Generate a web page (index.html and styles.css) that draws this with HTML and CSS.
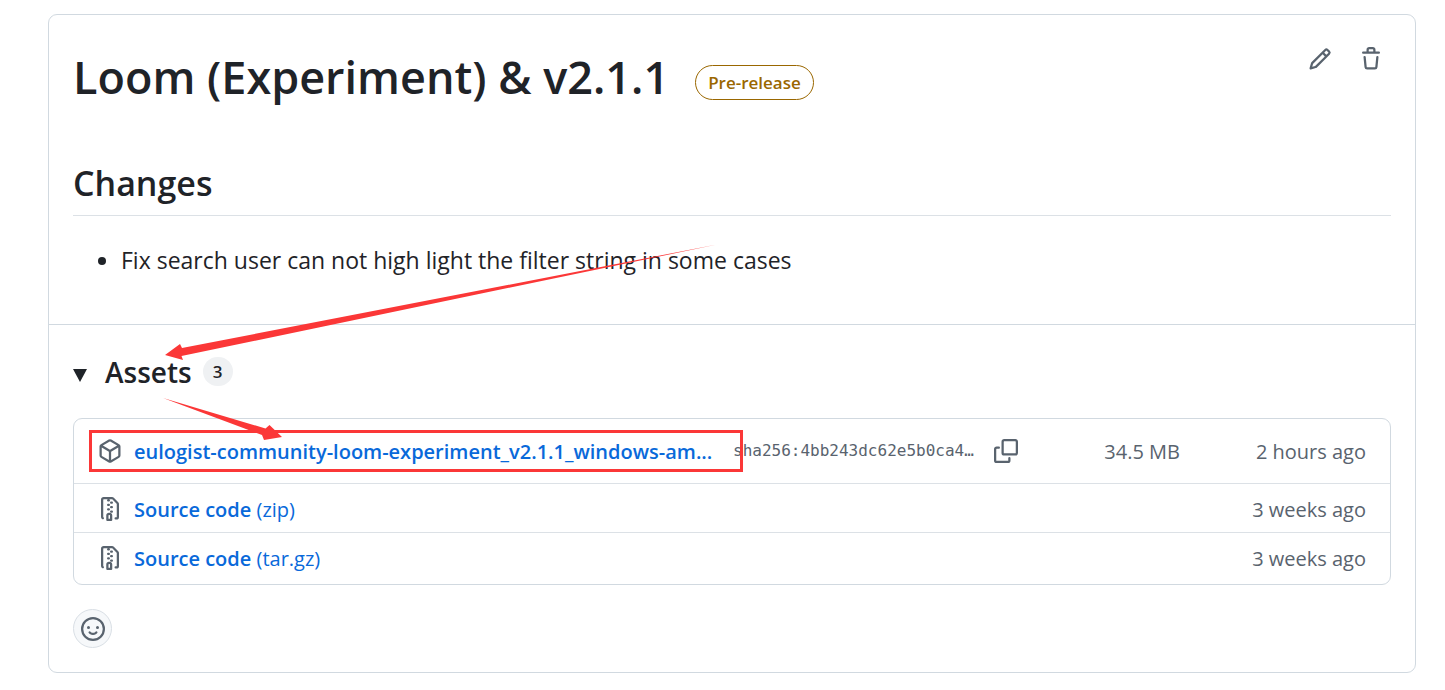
FILE: index.html
```html
<!DOCTYPE html>
<html lang="en">
<head>
<meta charset="utf-8">
<title>Loom (Experiment) &amp; v2.1.1</title>
<link rel="stylesheet" href="styles.css">
</head>
<body>
<svg class="sprite" aria-hidden="true">
  <symbol id="zip" viewBox="0 0 16 16"><path d="M3.500 1.750v11.500c0 .09.048.173.126.217a.75.75 0 0 1-.752 1.298A1.748 1.748 0 0 1 2 13.250V1.750C2 .784 2.784 0 3.750 0h5.586c.464 0 .909.185 1.237.513l2.914 2.914c.329.328.513.773.513 1.237v8.586A1.750 1.750 0 0 1 12.250 15h-.5a.75.75 0 0 1 0-1.500h.5a.25.25 0 0 0 .25-.25V4.664a.25.25 0 0 0-.073-.177L9.513 1.573a.25.25 0 0 0-.177-.073H7.250a.75.75 0 0 1 0 1.500h-.5a.75.75 0 0 1 0-1.500h-3a.25.25 0 0 0-.25.25Zm3.750 8.750h.5c.966 0 1.750.784 1.750 1.750v3a.75.75 0 0 1-.75.75h-2.500a.75.75 0 0 1-.75-.75v-3c0-.966.784-1.750 1.750-1.750ZM6 5.250a.75.75 0 0 1 .75-.75h.5a.75.75 0 0 1 0 1.500h-.5A.75.75 0 0 1 6 5.250Zm.75 2.250h.5a.75.75 0 0 1 0 1.500h-.5a.75.75 0 0 1 0-1.500ZM8 6.750A.75.75 0 0 1 8.750 6h.5a.75.75 0 0 1 0 1.500h-.5A.75.75 0 0 1 8 6.750ZM8.750 3h.5a.75.75 0 0 1 0 1.500h-.5a.75.75 0 0 1 0-1.500ZM8 9.750A.75.75 0 0 1 8.750 9h.5a.75.75 0 0 1 0 1.500h-.5A.75.75 0 0 1 8 9.750Zm-1 2.500v2.250h1v-2.250a.25.25 0 0 0-.25-.25h-.5a.25.25 0 0 0-.25.25Z"/></symbol>
</svg>
<main class="release">
  <section class="release-body">
    <header class="release-header">
      <h1 class="title">Loom (Experiment) &amp; v2.1.1</h1>
      <span class="label">Pre-release</span>
      <div class="actions">
        <button class="icon-button" type="button" aria-label="Edit"><svg class="icon" viewBox="0 0 16 16"><path d="M11.013 1.427a1.750 1.750 0 0 1 2.474 0l1.086 1.086a1.750 1.750 0 0 1 0 2.474l-8.610 8.610c-.21.21-.47.364-.756.445l-3.251.93a.75.75 0 0 1-.927-.928l.929-3.250c.081-.286.235-.547.445-.758l8.610-8.610Zm.176 4.823L9.750 4.810l-6.286 6.287a.253.253 0 0 0-.064.108l-.558 1.953 1.953-.558a.253.253 0 0 0 .108-.064Zm1.238-3.763a.25.25 0 0 0-.354 0L10.811 3.750l1.439 1.440 1.263-1.263a.25.25 0 0 0 0-.354Z"/></svg></button>
        <button class="icon-button" type="button" aria-label="Delete"><svg class="icon" viewBox="0 0 16 16"><path d="M11 1.750V3h2.250a.75.75 0 0 1 0 1.500H2.750a.75.75 0 0 1 0-1.500H5V1.750C5 .784 5.784 0 6.750 0h2.500C10.216 0 11 .784 11 1.750ZM4.496 6.675l.66 6.600a.25.25 0 0 0 .249.225h5.190a.25.25 0 0 0 .249-.225l.66-6.600a.75.75 0 0 1 1.492.149l-.66 6.600A1.748 1.748 0 0 1 10.595 15h-5.190a1.750 1.750 0 0 1-1.741-1.575l-.66-6.600a.75.75 0 1 1 1.492-.15ZM6.500 1.750V3h3V1.750a.25.25 0 0 0-.25-.25h-2.500a.25.25 0 0 0-.25.25Z"/></svg></button>
      </div>
    </header>
    <h2 class="section-title">Changes</h2>
    <ul class="changes">
      <li>Fix search user can not high light the filter string in some cases</li>
    </ul>
  </section>
  <section class="release-footer">
    <details class="assets" open>
      <summary class="assets-summary">
        <svg class="caret" viewBox="0 0 14 13" aria-hidden="true"><path d="M0 0h14L7 13Z"/></svg>
        <span class="assets-title">Assets</span>
        <span class="counter">3</span>
      </summary>
      <ul class="asset-list">
        <li class="asset asset-build">
          <svg class="icon" viewBox="0 0 16 16" aria-hidden="true"><path d="m8.878.392 5.250 3.045c.54.314.872.89.872 1.514v6.098a1.750 1.750 0 0 1-.872 1.514l-5.250 3.045a1.750 1.750 0 0 1-1.756 0l-5.250-3.045A1.750 1.750 0 0 1 1 11.049V4.951c0-.624.332-1.201.872-1.514L7.122.392a1.750 1.750 0 0 1 1.756 0ZM7.875 1.690l-4.630 2.685L8 7.133l4.755-2.758-4.630-2.685a.248.248 0 0 0-.25 0ZM2.500 5.677v5.372c0 .09.047.171.125.216l4.625 2.683V8.432Zm6.250 8.271 4.625-2.683a.25.25 0 0 0 .125-.216V5.677L8.750 8.432Z"/></svg>
          <a class="asset-link" href="#build"><span class="asset-name">eulogist-community-loom-experiment_v2.1.1_windows-am...</span></a>
          <span class="digest"><span class="hash">sha256:4bb243dc62e5b0ca4…</span>
            <button class="icon-button" type="button" aria-label="Copy digest"><svg class="icon" viewBox="0 0 16 16"><path d="M0 6.750C0 5.784.784 5 1.750 5h1.500a.75.75 0 0 1 0 1.500h-1.500a.25.25 0 0 0-.25.25v7.500c0 .138.112.25.25.25h7.500a.25.25 0 0 0 .25-.25v-1.500a.75.75 0 0 1 1.500 0v1.500A1.750 1.750 0 0 1 9.250 16h-7.500A1.750 1.750 0 0 1 0 14.250Z"/><path d="M5 1.750C5 .784 5.784 0 6.750 0h7.500C15.216 0 16 .784 16 1.750v7.500A1.750 1.750 0 0 1 14.250 11h-7.500A1.750 1.750 0 0 1 5 9.250Zm1.750-.25a.25.25 0 0 0-.25.25v7.500c0 .138.112.25.25.25h7.500a.25.25 0 0 0 .25-.25v-7.500a.25.25 0 0 0-.25-.25Z"/></svg></button>
          </span>
          <span class="size">34.5 MB</span>
          <span class="date">2 hours ago</span>
        </li>
        <li class="asset">
          <svg class="icon" aria-hidden="true"><use href="#zip"/></svg>
          <a class="asset-link" href="#zip-file"><span class="asset-name">Source code</span> (zip)</a>
          <span class="date">3 weeks ago</span>
        </li>
        <li class="asset">
          <svg class="icon" aria-hidden="true"><use href="#zip"/></svg>
          <a class="asset-link" href="#tar-file"><span class="asset-name">Source code</span> (tar.gz)</a>
          <span class="date">3 weeks ago</span>
        </li>
      </ul>
    </details>
    <button class="reaction" type="button" aria-label="Add reaction"><svg class="icon" viewBox="0 0 16 16"><path d="M8 0a8 8 0 1 1 0 16A8 8 0 0 1 8 0ZM1.500 8a6.500 6.500 0 1 0 13 0 6.500 6.500 0 0 0-13 0Zm3.820 1.636a.75.75 0 0 1 1.038.175l.007.009c.103.118.22.222.35.31.264.178.683.37 1.285.37.602 0 1.020-.192 1.285-.371.13-.088.247-.192.35-.31l.007-.008a.75.75 0 0 1 1.222.87 3.300 3.300 0 0 1-.737.686A3.770 3.770 0 0 1 8 12a3.770 3.770 0 0 1-2.126-.63 3.331 3.331 0 0 1-.737-.69.75.75 0 0 1 .183-1.044ZM12 7a1 1 0 1 1-2 0 1 1 0 0 1 2 0ZM5 8a1 1 0 1 1 0-2 1 1 0 0 1 0 2Z"/></svg></button>
  </section>
  <svg class="annotation" viewBox="81 240 670 240" aria-hidden="true">
    <path d="M165 355 180 344l2 4 535-103.500L181.500 356l1.500 4Z"/>
    <path d="M163 398 265.500 428.500l4-3.500L282 437l-18 3-2-5Z"/>
    <rect x="90.500" y="431.500" width="651" height="39"/>
  </svg>
</main>
</body>
</html>
```

FILE: styles.css
```css
* { box-sizing: border-box; }

body {
  margin: 0;
  padding: 14px 29px 16px 48px;
  background: #fff;
  color: #1f2328;
  font: 24px/36px "Open Sans", "Noto Sans", sans-serif;
}

h1, h2, ul { margin: 0; }

button {
  padding: 0;
  border: 0;
  background: none;
  color: inherit;
  cursor: pointer;
}

.sprite { display: none; }

.icon {
  display: block;
  flex: none;
  width: 24px;
  height: 24px;
  fill: #59636e;
}

.release {
  position: relative;
  border: 1px solid #d1d9e0;
  border-radius: 9px;
}

.release-body { padding: 24px 24px 46px; }

.release-header {
  display: flex;
  align-items: center;
  margin-bottom: 46px;
}

.title {
  font-size: 45px;
  font-weight: 600;
  line-height: 76px;
}

.label {
  margin: 10px 0 0 26px;
  padding: 0 12px;
  border: 1px solid #9a6700;
  border-radius: 18px;
  color: #9a6700;
  font-size: 17px;
  font-weight: 600;
  line-height: 33px;
}

.actions {
  display: flex;
  align-self: flex-start;
  gap: 27px;
  margin-left: auto;
  padding: 8px;
}

.section-title {
  padding-bottom: 9px;
  border-bottom: 1px solid #dce1e6;
  font-size: 34px;
  font-weight: 600;
  line-height: 45px;
}

.changes {
  margin-top: 26px;
  padding-left: 48px;
  font-size: 23px;
}

.release-footer {
  padding: 24px;
  border-top: 1px solid #d1d9e0;
}

.assets-summary {
  display: flex;
  align-items: center;
  height: 45px;
  list-style: none;
  cursor: pointer;
}

.caret {
  width: 14px;
  height: 13px;
  margin: 8px 18px 0 0;
  fill: #1f2328;
}

.assets-title {
  margin-right: 11px;
  font-size: 28px;
  font-weight: 600;
}

.counter {
  min-width: 30px;
  border-radius: 15px;
  background: #eff1f3;
  font-size: 17px;
  font-weight: 600;
  line-height: 29px;
  text-align: center;
}

.asset-list {
  margin: 24px 0;
  padding: 0;
  border: 1px solid #d1d9e0;
  border-radius: 9px;
  list-style: none;
}

.asset {
  display: flex;
  align-items: center;
  padding: 9px 24px 7px;
  color: #59636e;
  font-size: 20px;
  line-height: 30px;
}

.asset + .asset { border-top: 1px solid #dce1e6; }
.asset:last-child { padding-bottom: 10px; }
.asset-build { padding: 16px 24px; }

.asset-link {
  flex: 1;
  margin-left: 12px;
  padding-top: 2px;
  color: #0969da;
  text-decoration: none;
  white-space: nowrap;
}

.asset-name { font-weight: 600; }

.digest {
  display: flex;
  align-items: center;
  gap: 14px;
}

.hash {
  min-width: 247px;
  font: 16px/24px "DejaVu Sans Mono", monospace;
}

.size {
  width: 162px;
  padding-top: 2px;
  text-align: right;
}

.date {
  width: 186px;
  padding-top: 2px;
  text-align: right;
}

.reaction {
  display: grid;
  place-items: center;
  width: 39px;
  height: 39px;
  border: 1px solid #d9dfe5;
  border-radius: 50%;
  background: #f6f8fa;
}

.annotation {
  position: absolute;
  top: 225px;
  left: 32px;
  width: 670px;
  height: 240px;
  fill: #fb3737;
  pointer-events: none;
}

.annotation rect {
  fill: none;
  stroke: #fb3737;
  stroke-width: 3px;
}
```
